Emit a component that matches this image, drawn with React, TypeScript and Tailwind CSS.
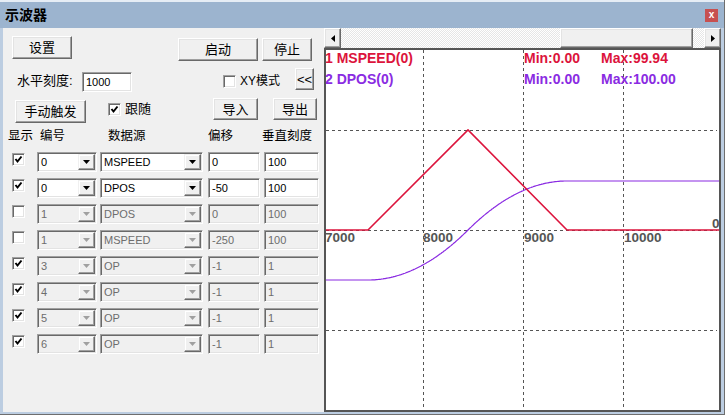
import type { ReactNode } from 'react'

const RED = '#dc143c'
const PURPLE = '#8a2be2'

interface Row {
  on: boolean
  num: string
  src: string
  off: string
  scale: string
  enabled: boolean
}

const rows: Row[] = [
  { on: true, num: '0', src: 'MSPEED', off: '0', scale: '100', enabled: true },
  { on: true, num: '0', src: 'DPOS', off: '-50', scale: '100', enabled: true },
  { on: false, num: '1', src: 'DPOS', off: '0', scale: '100', enabled: false },
  { on: false, num: '1', src: 'MSPEED', off: '-250', scale: '100', enabled: false },
  { on: true, num: '3', src: 'OP', off: '-1', scale: '1', enabled: false },
  { on: true, num: '4', src: 'OP', off: '-1', scale: '1', enabled: false },
  { on: true, num: '5', src: 'OP', off: '-1', scale: '1', enabled: false },
  { on: true, num: '6', src: 'OP', off: '-1', scale: '1', enabled: false },
]

function Btn({ children, className = '' }: { children?: ReactNode; className?: string }) {
  return (
    <div
      className={`flex items-center justify-center bg-[#f0f0f0] border border-t-white border-l-white border-b-[#696969] border-r-[#696969] shadow-[inset_-1px_-1px_0_#a0a0a0,inset_1px_1px_0_#e3e3e3] text-[13px] leading-none text-black ${className}`}
    >
      {children}
    </div>
  )
}

function Edit({ value, disabled = false, className = '' }: { value: string; disabled?: boolean; className?: string }) {
  return (
    <div
      className={`flex items-center pl-[3px] border border-t-[#a0a0a0] border-l-[#a0a0a0] border-b-white border-r-white shadow-[inset_1px_1px_0_#696969,inset_-1px_-1px_0_#e3e3e3] text-[11px] leading-none ${disabled ? 'bg-[#f0f0f0] text-[#6d6d6d]' : 'bg-white text-black'} ${className}`}
    >
      {value}
    </div>
  )
}

function Arrow({ disabled }: { disabled: boolean }) {
  return (
    <div className="flex h-full w-[17px] items-center justify-center bg-[#f0f0f0] border border-t-[#f0f0f0] border-l-[#f0f0f0] border-b-[#696969] border-r-[#696969] shadow-[inset_-1px_-1px_0_#a0a0a0,inset_1px_1px_0_#ffffff]">
      <svg width="7" height="4" viewBox="0 0 7 4">
        <polygon points="0,0 7,0 3.5,4" fill={disabled ? '#a0a0a0' : '#000'} />
      </svg>
    </div>
  )
}

function Combo({ value, disabled, className = '' }: { value: string; disabled: boolean; className?: string }) {
  return (
    <div
      className={`flex h-[20px] border border-t-[#a0a0a0] border-l-[#a0a0a0] border-b-white border-r-white shadow-[inset_1px_1px_0_#696969,inset_-1px_-1px_0_#e3e3e3] p-[1px] ${disabled ? 'bg-[#f0f0f0] text-[#6d6d6d]' : 'bg-white text-black'} ${className}`}
    >
      <div className="flex flex-1 items-center pl-[2px] text-[11px] leading-none">{value}</div>
      <Arrow disabled={disabled} />
    </div>
  )
}

function Check({ checked, className = '' }: { checked: boolean; className?: string }) {
  return (
    <div
      className={`flex h-[13px] w-[13px] shrink-0 items-center justify-center bg-white border border-t-[#a0a0a0] border-l-[#a0a0a0] border-b-white border-r-white shadow-[inset_1px_1px_0_#696969,inset_-1px_-1px_0_#e3e3e3] ${className}`}
    >
      {checked && (
        <svg width="9" height="9" viewBox="0 0 9 9">
          <path d="M1.5 4 L3.5 6.5 L7.5 1.5" fill="none" stroke="#000" strokeWidth="2" />
        </svg>
      )}
    </div>
  )
}

function Chart() {
  const purple: string[] = ['M1 232', 'L44 232']
  for (let x = 45; x <= 243; x++) {
    const t = (x - 44) / 199
    const p = t < 0.5 ? 2 * t * t : 1 - 2 * (1 - t) * (1 - t)
    purple.push(`L${x} ${(232 - 99 * p).toFixed(1)}`)
  }
  purple.push('L395 133')

  return (
    <svg width="397" height="364" viewBox="0 0 397 364" className="block bg-white">
      <g stroke="#555" strokeWidth="1" strokeDasharray="3 3" shapeRendering="crispEdges">
        {[99.5, 199.5, 299.5].map((x) => (
          <line key={x} x1={x} y1="2" x2={x} y2="362" />
        ))}
        {[82.5, 182.5, 282.5].map((y) => (
          <line key={y} x1="2" y1={y} x2="393" y2={y} />
        ))}
      </g>
      <path d={purple.join(' ')} fill="none" stroke={PURPLE} strokeWidth="1.2" />
      <polyline points="1,182 44,182 144,82 243,182 395,182" fill="none" stroke={RED} strokeWidth="1.6" />
      <g fontFamily="'Liberation Sans', sans-serif" fontWeight="bold" fontSize="14">
        <text x="1" y="15" fill={RED}>1 MSPEED(0)</text>
        <text x="200" y="15" fill={RED}>Min:0.00</text>
        <text x="277" y="15" fill={RED}>Max:99.94</text>
        <text x="1" y="36" fill={PURPLE}>2 DPOS(0)</text>
        <text x="200" y="36" fill={PURPLE}>Min:0.00</text>
        <text x="277" y="36" fill={PURPLE}>Max:100.00</text>
      </g>
      <g fontFamily="'Liberation Sans', sans-serif" fontWeight="bold" fontSize="13.5" fill="#555">
        <text x="1" y="194">7000</text>
        <text x="99" y="194">8000</text>
        <text x="200" y="194">9000</text>
        <text x="300" y="194">10000</text>
        <text x="388" y="180">0</text>
      </g>
      <rect x="1" y="1" width="395" height="362" fill="none" stroke="#555" strokeWidth="2" />
    </svg>
  )
}

function ScrollBar() {
  return (
    <div className="flex h-[20px] bg-[repeating-conic-gradient(#e6e6e6_0%_25%,#ffffff_0%_50%)] bg-[length:2px_2px]">
      <Btn className="w-[17px] h-full">
        <svg width="4" height="7" viewBox="0 0 4 7">
          <polygon points="4,0 4,7 0,3.5" fill="#000" />
        </svg>
      </Btn>
      <Btn className="ml-[219px] w-[133px] h-full" />
      <Btn className="ml-auto w-[17px] h-full">
        <svg width="4" height="7" viewBox="0 0 4 7">
          <polygon points="0,0 0,7 4,3.5" fill="#000" />
        </svg>
      </Btn>
    </div>
  )
}

export default function App() {
  return (
    <div className="flex h-[415px] w-[725px] flex-col overflow-hidden bg-[#bccde1] border-r border-b border-[#6e6e6e] font-['Liberation_Sans','Noto_Sans_CJK_SC',sans-serif] text-black">
      <div className="flex h-[28px] shrink-0 items-center bg-[#9cb4cf] border-t-2 border-[#e6edf5] pl-[5px] pr-[6px]">
        <span className="text-[14px] font-bold leading-none">示波器</span>
        <div className="ml-auto flex h-[13px] w-[13px] items-center justify-center bg-[#c75050] text-[10px] font-bold leading-none text-white">
          x
        </div>
      </div>

      <div className="flex h-[384px] shrink-0 pl-[3px] pr-[3px]">
        <div className="flex w-[321px] flex-col bg-[#f0f0f0]">
          <div className="mt-[8px] flex h-[25px] items-start">
            <Btn className="ml-[9px] h-[23px] w-[60px]">设置</Btn>
            <Btn className="ml-[106px] mt-[2px] h-[23px] w-[80px]">启动</Btn>
            <Btn className="ml-[4px] mt-[2px] h-[23px] w-[50px]">停止</Btn>
          </div>

          <div className="mt-[7px] flex h-[24px] items-start">
            <span className="ml-[14px] mt-[6px] w-[65px] text-[13px] leading-none">水平刻度:</span>
            <Edit value="1000" className="mt-[4px] h-[20px] w-[50px]" />
            <Check checked={false} className="ml-[91px] mt-[7px]" />
            <span className="ml-[4px] mt-[7px] w-[55px] text-[12px] leading-none">XY模式</span>
            <Btn className="h-[22px] w-[19px] text-[11px]">&lt;&lt;</Btn>
          </div>

          <div className="mt-[6px] flex h-[25px] items-start">
            <Btn className="ml-[12px] mt-[2px] h-[23px] w-[71px]">手动触发</Btn>
            <Check checked className="ml-[22px] mt-[5px]" />
            <span className="ml-[4px] mt-[4px] w-[88px] text-[13px] leading-none">跟随</span>
            <Btn className="h-[22px] w-[45px]">导入</Btn>
            <Btn className="ml-[15px] h-[22px] w-[44px]">导出</Btn>
          </div>

          <div className="mt-[5px] flex h-[17px] items-center text-[12.5px] leading-none">
            <span className="ml-[5px] w-[32px]">显示</span>
            <span className="w-[68px]">编号</span>
            <span className="w-[100px]">数据源</span>
            <span className="w-[54px]">偏移</span>
            <span>垂直刻度</span>
          </div>

          <div className="mt-[7px] flex flex-col gap-[6px]">
            {rows.map((r, i) => (
              <div key={i} className="flex h-[20px] items-start">
                <Check checked={r.on} className="ml-[9px] mt-[1px]" />
                <Combo value={r.num} disabled={!r.enabled} className="ml-[12px] w-[60px]" />
                <Combo value={r.src} disabled={!r.enabled} className="ml-[3px] w-[103px]" />
                <Edit value={r.off} disabled={!r.enabled} className="ml-[5px] h-[20px] w-[52px]" />
                <Edit value={r.scale} disabled={!r.enabled} className="ml-[4px] h-[20px] w-[55px]" />
              </div>
            ))}
          </div>
        </div>

        <div className="flex w-[397px] flex-col bg-[#f0f0f0]">
          <ScrollBar />
          <Chart />
        </div>
      </div>
    </div>
  )
}
